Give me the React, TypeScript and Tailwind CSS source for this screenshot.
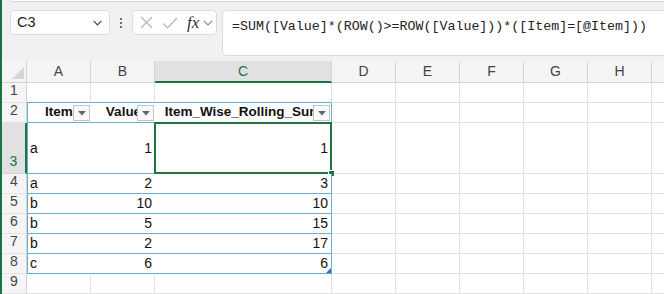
import React from 'react';

const TEAL = 'border-[#62b1cd]';

const FilterButton = () => (
  <div className="absolute right-[1px] top-[2px] w-[17px] h-[16px] bg-[#fafafa] border border-[#c4c4c4] flex items-center justify-center">
    <svg width="8" height="5" viewBox="0 0 8 5">
      <path d="M0 0h8L4 4.5z" fill="#666" />
    </svg>
  </div>
);

const RowHead = ({ n, h, selected }: { n: number; h: string; selected?: boolean }) => (
  <div
    className={`w-[25px] ${h} shrink-0 flex items-end justify-center pb-[1px] text-[14px] font-normal ${
      selected
        ? 'bg-[#e1e1e1] border-r-2 border-r-[#217346] text-[#217346] border-b border-b-[#d4d4d4]'
        : 'bg-[#f5f5f5] border-r border-r-[#d4d4d4] border-b border-b-[#e3e3e3] text-[#444]'
    }`}
  >
    {n}
  </div>
);

// blank grid cells D..I
const Blank = ({ h }: { h: string }) => (
  <>
    {[0, 1, 2, 3, 4].map((i) => (
      <div key={i} className={`w-[64px] ${h} shrink-0 border-r border-b border-[#e1e1e1] bg-white`} />
    ))}
    <div className={`flex-1 ${h} border-b border-[#e1e1e1] bg-white`} />
  </>
);

const data: [string, number, number][] = [
  ['a', 2, 3],
  ['b', 10, 10],
  ['b', 5, 15],
  ['b', 2, 17],
  ['c', 6, 6],
];

export default function App() {
  return (
    <div
      className="w-[664px] h-[294px] overflow-hidden bg-[#f1f1f1] flex"
      style={{ fontFamily: '"Liberation Sans", Arial, sans-serif' }}
    >
      <div className="w-[2px] h-full bg-[#1a7344] shrink-0" />
      <div className="flex-1 flex flex-col min-w-0">
        {/* ribbon edge */}
        <div className="ml-[8px] h-[4px] bg-white border-b border-l border-[#d6d6d6] rounded-bl-[6px]" />

        {/* formula bar */}
        <div className="flex items-start mt-[8px] h-[46px]">
          <div className="ml-[8px] w-[100px] h-[25px] bg-white border border-[#dcdcdc] rounded-[4px] flex items-center justify-between pl-[6px] pr-[7px]">
            <span className="text-[14.5px] text-[#222]">C3</span>
            <svg width="9" height="6" viewBox="0 0 9 6">
              <path d="M0.7 0.8L4.5 4.8L8.3 0.8" fill="none" stroke="#444" strokeWidth="1.2" />
            </svg>
          </div>
          <div className="w-[22px] h-[25px] flex flex-col items-center justify-center gap-[2px]">
            <div className="w-[2px] h-[2px] bg-[#444] rounded-full" />
            <div className="w-[2px] h-[2px] bg-[#444] rounded-full" />
            <div className="w-[2px] h-[2px] bg-[#444] rounded-full" />
          </div>
          <div className="w-[85px] h-[25px] bg-white border border-[#dcdcdc] rounded-[4px] flex items-center pl-[6px]">
            <svg width="13" height="13" viewBox="0 0 13 13" className="ml-[1px]">
              <path d="M1 1L12 12M12 1L1 12" stroke="#b4b4b4" strokeWidth="1.1" />
            </svg>
            <svg width="16" height="12" viewBox="0 0 16 12" className="ml-[9px]">
              <path d="M1 6.5L5.5 11L15 1" fill="none" stroke="#b4b4b4" strokeWidth="1.1" />
            </svg>
            <span
              className="ml-[9px] text-[17px] italic text-[#333] leading-none"
              style={{ fontFamily: '"Liberation Serif", "Times New Roman", serif' }}
            >
              fx
            </span>
            <svg width="10" height="6" viewBox="0 0 10 6" className="ml-[4px]">
              <path d="M0.8 0.8L5 5L9.2 0.8" fill="none" stroke="#888" strokeWidth="1.1" />
            </svg>
          </div>
          <div className="ml-[5px] flex-1 h-[46px] bg-white border border-r-0 border-[#dcdcdc] rounded-l-[5px] pl-[9px] pt-[2px]">
            <span
              className="text-[13.3px] text-[#222] whitespace-nowrap"
              style={{ fontFamily: '"Liberation Mono", "Courier New", monospace' }}
            >
              =SUM([Value]*(ROW()&gt;=ROW([Value]))*([Item]=[@Item]))
            </span>
          </div>
        </div>

        {/* sheet */}
        <div className="mt-[5px] flex flex-col text-[14px] text-[#111]">
          {/* column headers */}
          <div className="flex h-[22px]">
            <div className="w-[25px] shrink-0 bg-[#f5f5f5] border-r border-b border-[#d4d4d4] flex items-end justify-end pr-[2px] pb-[3px]">
              <svg width="12" height="12" viewBox="0 0 12 12">
                <path d="M12 0V12H0z" fill="#d6d6d6" />
              </svg>
            </div>
            {['A', 'B'].map((c) => (
              <div key={c} className="w-[64px] shrink-0 bg-[#f5f5f5] border-r border-b border-[#d4d4d4] flex items-center justify-center text-[#444]">
                {c}
              </div>
            ))}
            <div className="w-[177px] shrink-0 bg-[#e1e1e1] border-r border-r-[#d4d4d4] border-b-2 border-b-[#217346] flex items-center justify-center text-[#217346]">
              C
            </div>
            {['D', 'E', 'F', 'G', 'H'].map((c) => (
              <div key={c} className="w-[64px] shrink-0 bg-[#f5f5f5] border-r border-b border-[#d4d4d4] flex items-center justify-center text-[#444]">
                {c}
              </div>
            ))}
            <div className="flex-1 bg-[#f5f5f5] border-b border-[#d4d4d4]" />
          </div>

          {/* row 1 */}
          <div className="flex">
            <RowHead n={1} h="h-[20px]" />
            <div className={`w-[64px] h-[20px] shrink-0 bg-white border-r border-r-[#e1e1e1] border-b ${TEAL}`} />
            <div className={`w-[64px] h-[20px] shrink-0 bg-white border-r border-r-[#e1e1e1] border-b ${TEAL}`} />
            <div className={`w-[177px] h-[20px] shrink-0 bg-white border-r border-r-[#e1e1e1] border-b ${TEAL}`} />
            <Blank h="h-[20px]" />
          </div>

          {/* row 2: table header */}
          <div className="flex text-[13.5px]">
            <RowHead n={2} h="h-[20px]" />
            <div className={`relative w-[64px] h-[20px] shrink-0 bg-white border-l border-b ${TEAL} flex items-center justify-center overflow-hidden whitespace-nowrap font-bold`}>
              <span className="pr-[1px]">Item</span>
              <FilterButton />
            </div>
            <div className={`relative w-[64px] h-[20px] shrink-0 bg-white border-b ${TEAL} flex items-center justify-center overflow-hidden whitespace-nowrap font-bold`}>
              <span className="pl-[1px]">Value</span>
              <FilterButton />
            </div>
            <div className={`relative w-[177px] h-[20px] shrink-0 bg-white border-r border-b ${TEAL} flex items-center justify-center overflow-hidden whitespace-nowrap font-bold`}>
              <span>Item_Wise_Rolling_Sum</span>
              <FilterButton />
            </div>
            <Blank h="h-[20px]" />
          </div>

          {/* row 3 */}
          <div className="flex">
            <RowHead n={3} h="h-[51px]" selected />
            <div className={`w-[64px] h-[51px] shrink-0 bg-white border-l border-b ${TEAL} flex items-center pl-[2px]`}>a</div>
            <div className={`w-[64px] h-[51px] shrink-0 bg-white border-b ${TEAL} flex items-center justify-end pr-[3px]`}>1</div>
            <div className={`relative w-[177px] h-[51px] shrink-0 bg-white border-r border-b ${TEAL} flex items-center justify-end pr-[3px]`}>
              1
              <div className="absolute -left-[1px] -top-[1px] right-[-1px] bottom-[-1px] border-2 border-[#217346]" />
              <div className="absolute right-[-4px] bottom-[-4px] w-[7px] h-[7px] bg-[#217346] border border-white" />
            </div>
            <Blank h="h-[51px]" />
          </div>

          {/* rows 4-8 */}
          {data.map(([item, value, sum], i) => (
            <div key={i} className="flex">
              <RowHead n={i + 4} h="h-[20px]" />
              <div className={`w-[64px] h-[20px] shrink-0 bg-white border-l border-b ${TEAL} flex items-center pl-[2px]`}>{item}</div>
              <div className={`w-[64px] h-[20px] shrink-0 bg-white border-b ${TEAL} flex items-center justify-end pr-[3px]`}>{value}</div>
              <div className={`relative w-[177px] h-[20px] shrink-0 bg-white border-r border-b ${TEAL} flex items-center justify-end pr-[3px]`}>
                {sum}
                {i === data.length - 1 && (
                  <svg width="5" height="5" viewBox="0 0 5 5" className="absolute right-0 bottom-0">
                    <path d="M5 0V5H0z" fill="#2f6dc4" />
                  </svg>
                )}
              </div>
              <Blank h="h-[20px]" />
            </div>
          ))}

          {/* row 9 */}
          <div className="flex">
            <RowHead n={9} h="h-[20px]" />
            <div className="w-[64px] h-[20px] shrink-0 bg-white border-r border-b border-[#e1e1e1]" />
            <div className="w-[64px] h-[20px] shrink-0 bg-white border-r border-b border-[#e1e1e1]" />
            <div className="w-[177px] h-[20px] shrink-0 bg-white border-r border-b border-[#e1e1e1]" />
            <Blank h="h-[20px]" />
          </div>
        </div>
      </div>
    </div>
  );
}
